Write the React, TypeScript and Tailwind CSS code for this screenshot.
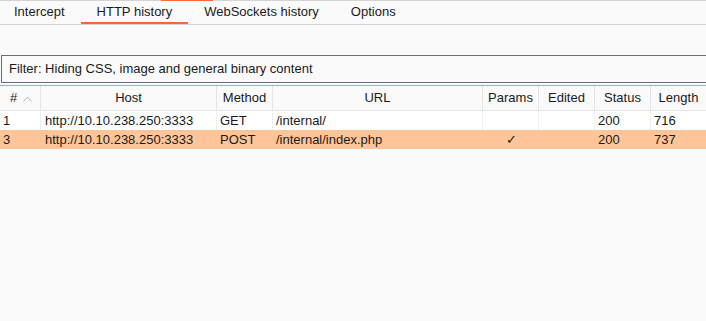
import React from "react";

type Col = { label: string; width: string; align: "left" | "center" };

const cols: Col[] = [
  { label: "#", width: "w-[41px]", align: "left" },
  { label: "Host", width: "w-[176px]", align: "left" },
  { label: "Method", width: "w-[56px]", align: "left" },
  { label: "URL", width: "w-[210px]", align: "left" },
  { label: "Params", width: "w-[56px]", align: "center" },
  { label: "Edited", width: "w-[56px]", align: "left" },
  { label: "Status", width: "w-[56px]", align: "left" },
  { label: "Length", width: "flex-1", align: "left" },
];

const rows = [
  { id: "1", host: "http://10.10.238.250:3333", method: "GET", url: "/internal/", params: "", edited: "", status: "200", length: "716", hl: false },
  { id: "3", host: "http://10.10.238.250:3333", method: "POST", url: "/internal/index.php", params: "✓", edited: "", status: "200", length: "737", hl: true },
];

const tabs = ["Intercept", "HTTP history", "WebSockets history", "Options"];

export default function App() {
  return (
    <div
      className="w-[706px] h-[321px] overflow-hidden bg-[#fafafa] text-[13px] text-[#1a1a1a]"
      style={{ fontFamily: '"Liberation Sans", Arial, sans-serif' }}
    >
      {/* strip of the parent tab bar */}
      <div className="h-px bg-[#d4d4d4] flex">
        <div className="ml-[161px] w-[52px] h-px bg-[#ff6633]" />
      </div>
      <div className="flex h-[24px] border-b border-[#d2d2d2]">
        {tabs.map((t, i) => (
          <div
            key={t}
            className={
              "flex items-center pr-[16px] pt-px border-b-2 " +
              (i === 0 ? "pl-[14px] " : "pl-[16px] ") +
              (t === "HTTP history" ? "border-[#ff6633]" : "border-transparent")
            }
          >
            {t}
          </div>
        ))}
      </div>

      <div className="mt-[30px] ml-px h-[28px] border border-r-0 border-[#6e6e6e] flex items-center pl-[7px]">
        Filter: Hiding CSS, image and general binary content
      </div>

      <div className="mt-[2px] border-t border-[#8fb2dd]">
        <div className="flex h-[25px] border-b border-[#e4e4e4] bg-[#fafafa]">
          {cols.map((c, i) => (
            <div
              key={c.label}
              className={
                c.width +
                " flex items-center justify-center" +
                (i < cols.length - 1 ? " border-r border-[#e4e4e4]" : "")
              }
            >
              {c.label === "#" ? (
                <span className="flex items-center gap-[6px] ml-[2px]">
                  #
                  <svg width="9" height="6" viewBox="0 0 9 6" className="mt-px">
                    <path d="M0.5 5.5 L4.5 1 L8.5 5.5" fill="none" stroke="#b8b8b8" strokeWidth="1" />
                  </svg>
                </span>
              ) : (
                c.label
              )}
            </div>
          ))}
        </div>
        {rows.map((r) => {
          const cells = [r.id, r.host, r.method, r.url, r.params, r.edited, r.status, r.length];
          return (
            <div key={r.id} className={"flex h-[19px] " + (r.hl ? "bg-[#ffc599]" : "bg-white")}>
              {cells.map((v, i) => (
                <div
                  key={i}
                  className={
                    cols[i].width +
                    " flex items-center " +
                    (cols[i].align === "center" ? "justify-center " : "pl-[3px] ") +
                    (i === 1 ? "pl-[4px] " : "") +
                    (i < cells.length - 1 && !r.hl ? "border-r border-[#efefef]" : "")
                  }
                >
                  {v}
                </div>
              ))}
            </div>
          );
        })}
      </div>
    </div>
  );
}
